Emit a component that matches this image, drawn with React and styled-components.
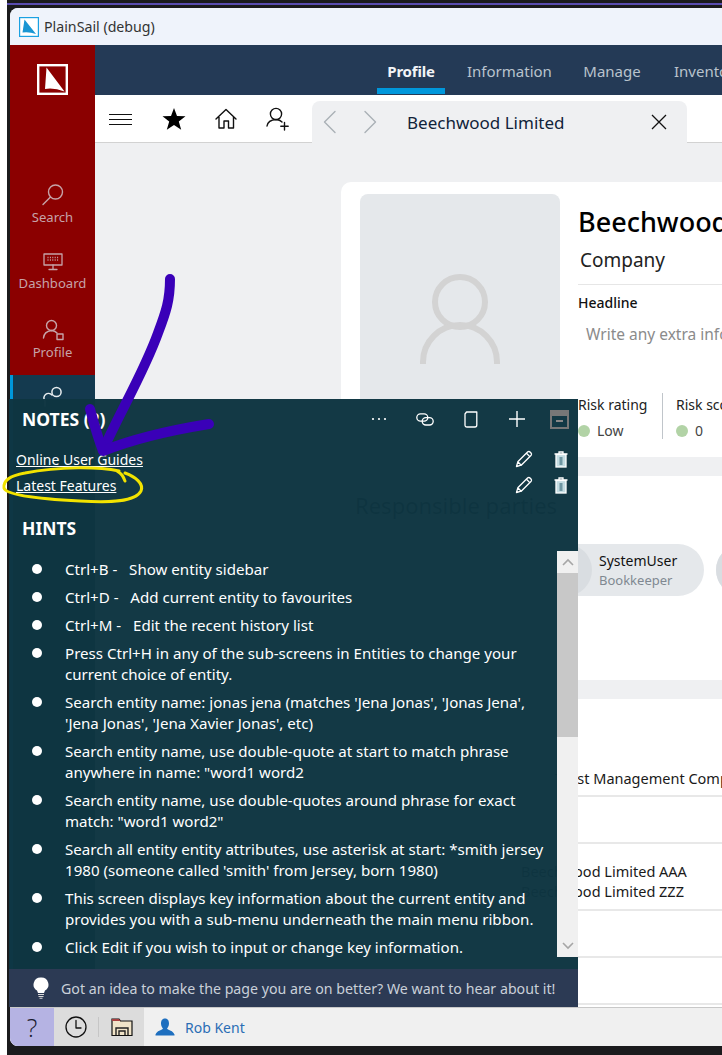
import React from "react";
import styled, { createGlobalStyle } from "styled-components";

const FONT = `"Noto Sans", "Open Sans", "Liberation Sans", sans-serif`;

const Global = createGlobalStyle`
  html, body { margin: 0; padding: 0; background: #fff; }
  body { font-family: ${FONT}; overflow: hidden; }
  * { box-sizing: border-box; }
`;

const Stage = styled.div`
  position: relative;
  width: 722px;
  height: 1055px;
  overflow: hidden;
  padding-left: 7px;
`;
const Desktop = styled.div`
  height: 100%;
  background: #1b1b1d;
  display: flex;
  flex-direction: column;
`;
const TopEdge = styled.div`
  height: 8px;
  padding-top: 3px;
  flex: none;
`;
const PurpleLine = styled.div`
  height: 2px;
  background: #5a4db0;
`;
const Win = styled.div`
  margin-left: 3px;
  height: 1038px;
  flex: none;
  border-radius: 8px 0 0 8px;
  overflow: hidden;
  display: flex;
  flex-direction: column;
  background: #eff0f2;
`;
const TitleBar = styled.div`
  height: 37px;
  flex: none;
  background: #eff3fb;
  display: flex;
  align-items: center;
  gap: 5px;
  padding-left: 9px;
  font-size: 14.2px;
  color: #333;
`;
const Main = styled.div`
  flex: 1;
  min-height: 0;
  display: flex;
`;
const Sidebar = styled.nav`
  width: 85px;
  flex: none;
  background: #8b0000;
  display: flex;
  flex-direction: column;
`;
const LogoBlock = styled.div`
  height: 128px;
  flex: none;
  padding-top: 19px;
  display: flex;
  justify-content: center;
`;
const SideItem = styled.div`
  height: ${(p) => p.$h}px;
  flex: none;
  display: flex;
  flex-direction: column;
  align-items: center;
  justify-content: flex-end;
  padding-bottom: 14px;
  gap: 1px;
  font-size: 13.1px;
  color: #c6a3a8;
`;
const ActiveSide = styled.div`
  flex: 1;
  background: #143a4f;
  border-left: 3px solid #0097db;
  display: flex;
  justify-content: center;
  padding-top: 11px;
  color: #ddd;
`;
const Content = styled.div`
  flex: 1;
  min-width: 0;
  display: flex;
  flex-direction: column;
`;
const TabBar = styled.div`
  height: 50px;
  flex: none;
  background: #243a56;
  display: flex;
  padding-left: 282px;
  overflow: hidden;
`;
const Tab = styled.div`
  height: 49px;
  flex: none;
  width: ${(p) => p.$w}px;
  padding: 16px 0 0;
  margin-right: ${(p) => p.$mr || 0}px;
  text-align: center;
  font-size: 15px;
  line-height: 20px;
  white-space: nowrap;
  font-weight: ${(p) => (p.$active ? 700 : 400)};
  letter-spacing: ${(p) => (p.$active ? "-0.2px" : "0")};
  color: ${(p) => (p.$active ? "#f2f4f7" : "#b9c3cd")};
  border-bottom: ${(p) => (p.$active ? "6px solid #0097db" : "none")};
`;
const Toolbar = styled.div`
  height: 48px;
  flex: none;
  background: #fff;
  border-bottom: 1px solid #d2d2d2;
  display: flex;
  align-items: center;
  padding-left: 14px;
`;
const ToolSlot = styled.div`
  width: ${(p) => p.$w}px;
  margin-left: ${(p) => p.$ml || 0}px;
  flex: none;
  display: flex;
  justify-content: center;
  align-items: center;
`;
const EntityTab = styled.div`
  margin-left: 6px;
  align-self: flex-end;
  width: 375px;
  height: 42px;
  background: #eff0f2;
  border-radius: 8px 8px 0 0;
  display: flex;
  align-items: center;
  flex: none;
  padding-left: 10px;
  margin-bottom: -1px;
`;
const EntityName = styled.div`
  width: 247px;
  padding-left: 5px;
  font-size: 17px;
  color: #11233a;
  white-space: nowrap;
`;
const Workspace = styled.div`
  flex: 1;
  min-height: 0;
  overflow: hidden;
  padding: 39px 0 0 246px;
  display: flex;
  flex-direction: column;
  gap: 19px;
`;
const ProfileCard = styled.section`
  height: 275px;
  flex: none;
  width: 500px;
  background: #fff;
  border-radius: 10px 0 0 10px;
  padding: 12px 0 0 19px;
  display: flex;
  gap: 18px;
`;
const Avatar = styled.div`
  width: 200px;
  height: 260px;
  flex: none;
  background: #e5e8eb;
  border-radius: 8px;
  display: flex;
  justify-content: center;
  padding-top: 80px;
`;
const Details = styled.div`
  flex: 1;
  min-width: 0;
  white-space: nowrap;
`;
const Name = styled.h1`
  margin: 11px 0 0;
  font-size: 27px;
  line-height: 34px;
  font-weight: 500;
  color: #000;
`;
const Kind = styled.div`
  margin: 8px 0 0 2px;
  font-size: 19px;
  line-height: 26px;
  color: #222;
`;
const Rule = styled.div`
  height: 1px;
  background: #e6e6e6;
  margin-top: 11px;
`;
const Headline = styled.div`
  margin-top: 8px;
  font-size: 14px;
  line-height: 20px;
  font-weight: 500;
  color: #111;
`;
const Placeholder = styled.div`
  margin: 11px 0 0 8px;
  font-size: 15.5px;
  line-height: 20px;
  color: #8b8b8b;
`;
const Risks = styled.div`
  margin-top: 49px;
  display: flex;
`;
const Risk = styled.div`
  width: ${(p) => p.$w}px;
  height: 46px;
  flex: none;
  font-size: 14px;
  line-height: 24px;
  color: #222;
  padding-left: ${(p) => p.$pl || 0}px;
  border-left: ${(p) => (p.$line ? "1px solid #c0c5ca" : "none")};
`;
const RiskValue = styled.div`
  display: flex;
  align-items: center;
  gap: 7px;
  line-height: 28px;
  color: #444;
`;
const Dot = styled.span`
  width: 12px;
  height: 12px;
  border-radius: 50%;
  background: #b2d3a6;
`;
const PartiesCard = styled.section`
  height: 204px;
  flex: none;
  width: 500px;
  background: #fff;
  padding: 14px 0 0 14px;
`;
const PartiesTitle = styled.h2`
  margin: 0;
  font-size: 22px;
  line-height: 30px;
  font-weight: 400;
  color: #222;
`;
const Chips = styled.div`
  margin: 24px 0 0 0;
  display: flex;
  gap: 12px;
  padding-left: 185px;
`;
const Chip = styled.div`
  width: 164px;
  height: 52px;
  flex: none;
  border-radius: 26px;
  background: #e5e8eb;
  display: flex;
  align-items: center;
  gap: 7px;
  font-size: 14px;
  line-height: 20px;
  color: #111;
`;
const ChipAvatar = styled.div`
  width: 52px;
  height: 52px;
  flex: none;
  border-radius: 50%;
  background: #d9dde1;
`;
const ChipRole = styled.div`
  font-size: 13px;
  line-height: 19px;
  color: #808891;
`;
const TableCard = styled.section`
  flex: 1;
  width: 500px;
  background: #fff;
`;
const TableRow = styled.div`
  height: ${(p) => p.$h}px;
  border-bottom: 2px solid #e8e8e8;
  padding-left: ${(p) => p.$indent}px;
  display: flex;
  flex-direction: column;
  justify-content: flex-end;
  padding-bottom: ${(p) => p.$pb}px;
  font-size: 14.5px;
  line-height: 20px;
  color: #1a1a1a;
  white-space: nowrap;
`;
const StatusBar = styled.footer`
  height: 39px;
  flex: none;
  background: #f0f0f0;
  border-top: 1px solid #c8c8c8;
  display: flex;
  align-items: stretch;
`;
const HelpBox = styled.div`
  width: 44px;
  background: #b5b3e3;
  display: flex;
  align-items: center;
  justify-content: center;
  font-family: "Open Sans", sans-serif;
  font-weight: 300;
  font-size: 25px;
  color: #1a1a2e;
`;
const QuickBox = styled.div`
  width: 90px;
  background: #dcdcdc;
  display: flex;
  align-items: center;
`;
const QuickSlot = styled.div`
  width: 45px;
  height: 20px;
  display: flex;
  align-items: center;
  justify-content: center;
  border-right: ${(p) => (p.$line ? "1px solid #c6c6c6" : "none")};
`;
const UserBox = styled.div`
  display: flex;
  align-items: center;
  padding-left: 11px;
  gap: 10px;
  font-size: 14px;
  color: #2a6db5;
`;

const NotesPanel = styled.aside`
  position: absolute;
  left: 9px;
  top: 399px;
  width: 569px;
  height: 608px;
  background: rgba(14, 53, 65, 0.98);
  display: flex;
  flex-direction: column;
  color: #fff;
`;
const PanelHead = styled.div`
  height: 40px;
  flex: none;
  display: flex;
  align-items: center;
`;
const PanelTitle = styled.h3`
  margin: 0;
  padding-left: 13px;
  font-size: 17.5px;
  line-height: 24px;
  font-weight: 700;
  color: #fff;
  white-space: nowrap;
`;
const HeadTools = styled.div`
  margin-left: auto;
  display: flex;
  align-items: center;
`;
const IconSlot = styled.div`
  width: ${(p) => p.$w}px;
  flex: none;
  display: flex;
  align-items: center;
  justify-content: center;
`;
const Links = styled.div`
  margin-top: 7px;
  flex: none;
`;
const LinkRow = styled.div`
  height: 26px;
  display: flex;
  align-items: center;
  padding-left: 7px;
`;
const NoteLink = styled.a`
  font-size: 14px;
  color: #fff;
  text-decoration: underline;
  margin-right: auto;
`;
const HintsTitle = styled(PanelTitle)`
  margin-top: 15px;
  line-height: 30px;
  flex: none;
`;
const HintsFrame = styled.div`
  margin-top: 8px;
  height: 406px;
  flex: none;
  display: flex;
`;
const HintList = styled.ul`
  flex: 1;
  min-width: 0;
  margin: 0;
  padding: 8px 0 0 19px;
  list-style: none;
  overflow: hidden;
  display: flex;
  flex-direction: column;
  gap: 7px;
`;
const Hint = styled.li`
  display: flex;
  font-size: 15.1px;
  line-height: 21px;
  color: #fff;
`;
const HintLine = styled.div`
  white-space: pre;
`;
const Bullet = styled.span`
  width: 10px;
  height: 10px;
  flex: none;
  margin: 5px 23px 0 4px;
  border-radius: 50%;
  background: #fff;
`;
const Scrollbar = styled.div`
  width: 21px;
  flex: none;
  background: #f0f0f0;
  display: flex;
  flex-direction: column;
  align-items: center;
`;
const ScrollArrow = styled.div`
  height: 22px;
  flex: none;
  display: flex;
  align-items: center;
`;
const ScrollThumb = styled.div`
  width: 100%;
  height: 164px;
  flex: none;
  background: #c8c8c8;
`;
const ScrollSpace = styled.div`
  flex: 1;
`;
const Feedback = styled.div`
  margin-top: auto;
  height: 38px;
  flex: none;
  background: #2c3a54;
  display: flex;
  align-items: center;
  padding-left: 24px;
  gap: 12px;
  font-size: 14.2px;
  color: #c9d0d9;
  white-space: nowrap;
`;
const Annotation = styled.svg`
  position: absolute;
  left: 0;
  top: 0;
  pointer-events: none;
`;

const hints = [
  ["Ctrl+B -   Show entity sidebar"],
  ["Ctrl+D -   Add current entity to favourites"],
  ["Ctrl+M -   Edit the recent history list"],
  ["Press Ctrl+H in any of the sub-screens in Entities to change your", "current choice of entity."],
  ["Search entity name: jonas jena (matches 'Jena Jonas', 'Jonas Jena',", "'Jena Jonas', 'Jena Xavier Jonas', etc)"],
  ["Search entity name, use double-quote at start to match phrase", "anywhere in name: \"word1 word2"],
  ["Search entity name, use double-quotes around phrase for exact", "match: \"word1 word2\""],
  ["Search all entity entity attributes, use asterisk at start: *smith jersey", "1980 (someone called 'smith' from Jersey, born 1980)"],
  ["This screen displays key information about the current entity and", "provides you with a sub-menu underneath the main menu ribbon."],
  ["Click Edit if you wish to input or change key information."],
];

const line = { fill: "none", stroke: "currentColor", strokeLinecap: "round", strokeLinejoin: "round" };

const Sail = ({ size }) => (
  <svg width={size} height={size} viewBox="0 0 20 20">
    <rect x="0.6" y="0.6" width="18.8" height="18.8" fill="#fff" stroke="#1ba1e2" strokeWidth="1.2" />
    <path d="M5.5 2.5 L17 17 Q10 14.5 3.5 15.5 Z" fill="#1996d3" />
  </svg>
);
const Pencil = () => (
  <svg width="18" height="18" viewBox="0 0 18 18" style={line} color="#fff" strokeWidth="1.3">
    <path d="M1.5 16.5 L2.8 11.8 L12.8 1.8 Q14 1 15.3 2.2 L16 3 Q17 4.2 16.2 5.2 L6.2 15.2 Z M11.5 3.2 L14.8 6.6 M2.8 11.8 L6.2 15.2" />
  </svg>
);
const Trash = () => (
  <svg width="14" height="17" viewBox="0 0 14 17">
    <rect x="2" y="3.5" width="10" height="12.5" fill="#c4dce2" stroke="#fff" strokeWidth="1.3" />
    <path d="M0.5 3 H13.5 M5 3 V1 H9 V3" stroke="#fff" strokeWidth="1.3" fill="none" />
    <path d="M7 6 V14" stroke="#6f97a3" strokeWidth="3" />
  </svg>
);

export default function App() {
  return (
    <>
      <Global />
      <Stage>
        <Desktop>
          <TopEdge>
            <PurpleLine />
          </TopEdge>
          <Win>
            <TitleBar>
              <Sail size={20} />
              PlainSail (debug)
            </TitleBar>
            <Main>
              <Sidebar>
                <LogoBlock>
                  <svg width="31" height="31" viewBox="0 0 31 31">
                    <rect x="1.2" y="1.2" width="28.6" height="28.6" fill="none" stroke="#fff" strokeWidth="2.4" />
                    <path d="M9.5 3.5 L27.5 27.5 Q17 23.5 8 25 Z" fill="#fff" />
                  </svg>
                </LogoBlock>
                <SideItem $h={67}>
                  <svg width="24" height="24" viewBox="0 0 24 24" style={line} color="#c6a3a8" strokeWidth="1.4">
                    <circle cx="14.5" cy="9" r="7" />
                    <path d="M9.5 14 L2 21.5" />
                  </svg>
                  Search
                </SideItem>
                <SideItem $h={66}>
                  <svg width="22" height="22" viewBox="0 0 22 22" style={line} color="#c6a3a8" strokeWidth="1.3">
                    <rect x="2" y="3" width="18" height="11" />
                    <path d="M11 14 V18 M7 18.5 H15" />
                    <path d="M5.5 6.5 H16.5 M5.5 9 H16.5" strokeDasharray="1 1.4" strokeLinecap="butt" />
                  </svg>
                  Dashboard
                </SideItem>
                <SideItem $h={69}>
                  <svg width="24" height="24" viewBox="0 0 24 24" style={line} color="#c6a3a8" strokeWidth="1.4">
                    <circle cx="10.5" cy="7.5" r="5" />
                    <path d="M2.5 20 Q3 13.5 10.5 12.5 Q14 12.8 16 15" />
                    <rect x="16" y="16" width="6" height="5.5" />
                  </svg>
                  Profile
                </SideItem>
                <ActiveSide>
                  <svg width="22" height="22" viewBox="0 0 22 22" style={line} color="#e8edf0" strokeWidth="1.5">
                    <circle cx="13.5" cy="6" r="4.6" />
                    <path d="M2 20 V15 A4.6 4.6 0 0 1 9 9" />
                  </svg>
                </ActiveSide>
              </Sidebar>
              <Content>
                <TabBar>
                  <Tab $w={68} $mr={22} $active>Profile</Tab>
                  <Tab $w={84} $mr={32}>Information</Tab>
                  <Tab $w={58} $mr={27}>Manage</Tab>
                  <Tab $w={80}>Inventory</Tab>
                </TabBar>
                <Toolbar>
                  <ToolSlot $w={24}>
                    <svg width="24" height="12" viewBox="0 0 24 12" stroke="#111" strokeWidth="1">
                      <path d="M0 1.5 H23 M0 6.5 H23 M0 11.5 H23" />
                    </svg>
                  </ToolSlot>
                  <ToolSlot $w={57} $ml={12}>
                    <svg width="24" height="24" viewBox="0 0 24 24">
                      <path d="M12 1 L15 9 L23.5 9.3 L16.8 14.5 L19.2 22.8 L12 18 L4.8 22.8 L7.2 14.5 L0.5 9.3 L9 9 Z" fill="#000" />
                    </svg>
                  </ToolSlot>
                  <ToolSlot $w={47}>
                    <svg width="24" height="22" viewBox="0 0 24 22" style={line} color="#111" strokeWidth="1.4">
                      <path d="M2 11 L12 1.5 L22 11 M5 9 V20 H10 V13 H14.5 V20 H19.5 V9" />
                    </svg>
                  </ToolSlot>
                  <ToolSlot $w={57}>
                    <svg width="26" height="26" viewBox="0 0 26 26" style={line} color="#111" strokeWidth="1.4">
                      <circle cx="11" cy="8" r="5.6" />
                      <path d="M2 20 Q3 14 11 13.5 Q15 13.8 17 16 M19.5 16.5 V24 M15.8 20.3 H23.2" />
                    </svg>
                  </ToolSlot>
                  <EntityTab>
                    <ToolSlot $w={16}>
                      <svg width="14" height="24" viewBox="0 0 14 24" style={line} color="#aab0b6" strokeWidth="1.4">
                        <path d="M12 1.5 L1.5 12 L12 22.5" />
                      </svg>
                    </ToolSlot>
                    <ToolSlot $w={64}>
                      <svg width="14" height="24" viewBox="0 0 14 24" style={line} color="#aab0b6" strokeWidth="1.4">
                        <path d="M2 1.5 L12.5 12 L2 22.5" />
                      </svg>
                    </ToolSlot>
                    <EntityName>Beechwood Limited</EntityName>
                    <ToolSlot $w={20}>
                      <svg width="16" height="16" viewBox="0 0 16 16" stroke="#111" strokeWidth="1.3">
                        <path d="M1 1 L15 15 M15 1 L1 15" />
                      </svg>
                    </ToolSlot>
                  </EntityTab>
                </Toolbar>
                <Workspace>
                  <ProfileCard>
                    <Avatar>
                      <svg width="80" height="90" viewBox="0 0 80 90" fill="none" stroke="#d3d3d3" strokeWidth="6">
                        <circle cx="40" cy="28" r="25" />
                        <path d="M3 90 V88 A37 37 0 0 1 77 88 V90" />
                      </svg>
                    </Avatar>
                    <Details>
                      <Name>Beechwood Limited</Name>
                      <Kind>Company</Kind>
                      <Rule />
                      <Headline>Headline</Headline>
                      <Placeholder>Write any extra information here</Placeholder>
                      <Risks>
                        <Risk $w={84}>
                          Risk rating
                          <RiskValue><Dot />Low</RiskValue>
                        </Risk>
                        <Risk $w={120} $pl={13} $line>
                          Risk score
                          <RiskValue><Dot />0</RiskValue>
                        </Risk>
                      </Risks>
                    </Details>
                  </ProfileCard>
                  <PartiesCard>
                    <PartiesTitle>Responsible parties</PartiesTitle>
                    <Chips>
                      <Chip>
                        <ChipAvatar />
                        <div>
                          SystemUser
                          <ChipRole>Bookkeeper</ChipRole>
                        </div>
                      </Chip>
                      <Chip>
                        <ChipAvatar />
                      </Chip>
                    </Chips>
                  </PartiesCard>
                  <TableCard>
                    <TableRow $h={98} $indent={214} $pb={7}>Trust Management Company</TableRow>
                    <TableRow $h={47} $indent={180} $pb={0} />
                    <TableRow $h={67} $indent={180} $pb={8}>
                      <div>Beechwood Limited AAA</div>
                      <div>Beechwood Limited ZZZ</div>
                    </TableRow>
                    <TableRow $h={47} $indent={180} $pb={0} />
                    <TableRow $h={47} $indent={180} $pb={0} />
                  </TableCard>
                </Workspace>
              </Content>
            </Main>
            <StatusBar>
              <HelpBox>?</HelpBox>
              <QuickBox>
                <QuickSlot $line>
                  <svg width="22" height="22" viewBox="0 0 22 22" style={line} color="#111" strokeWidth="1.3">
                    <circle cx="11" cy="11" r="10" />
                    <path d="M11 4.5 V12 H16" />
                  </svg>
                </QuickSlot>
                <QuickSlot>
                  <svg width="22" height="20" viewBox="0 0 22 20">
                    <path d="M1 2 H8 L9.5 4 H21 V18.5 H1 Z" fill="#f0e3c8" stroke="#111" strokeWidth="1.2" />
                    <path d="M1 2 H8 L9.5 4 H1 Z" fill="#a84040" />
                    <path d="M5 18 V11 H17 V18 M8 18 V14 H14 V18" fill="none" stroke="#222" strokeWidth="1.4" />
                  </svg>
                </QuickSlot>
              </QuickBox>
              <UserBox>
                <svg width="20" height="18" viewBox="0 0 20 18">
                  <path d="M10 0.5 C13 0.5 14 3 14 5.5 C14 8 12.8 9.5 12 10.5 C13.5 12.5 18 12.5 19.5 16.5 V17.5 H0.5 V16.5 C2 12.5 6.5 12.5 8 10.5 C7.2 9.5 6 8 6 5.5 C6 3 7 0.5 10 0.5 Z" fill="#1e6fbf" />
                </svg>
                Rob Kent
              </UserBox>
            </StatusBar>
          </Win>
        </Desktop>

        <NotesPanel>
          <PanelHead>
            <PanelTitle>NOTES (2)</PanelTitle>
            <HeadTools>
              <IconSlot $w={46}>
                <svg width="16" height="4" viewBox="0 0 16 4" fill="#fff">
                  <circle cx="2" cy="2" r="1.1" /><circle cx="8" cy="2" r="1.1" /><circle cx="14" cy="2" r="1.1" />
                </svg>
              </IconSlot>
              <IconSlot $w={46}>
                <svg width="18" height="13" viewBox="0 0 18 13" fill="none" stroke="#fff" strokeWidth="1.3">
                  <rect x="0.8" y="0.8" width="11" height="7.4" rx="3.7" />
                  <rect x="6.2" y="4.6" width="11" height="7.4" rx="3.7" />
                </svg>
              </IconSlot>
              <IconSlot $w={46}>
                <svg width="14" height="17" viewBox="0 0 14 17" style={line} color="#fff" strokeWidth="1.3">
                  <path d="M2.5 1 H12.8 V14 Q12.8 16 11 16 H3 Q1 16 1 14 V3 Z" />
                </svg>
              </IconSlot>
              <IconSlot $w={46}>
                <svg width="16" height="16" viewBox="0 0 16 16" stroke="#fff" strokeWidth="1.4">
                  <path d="M8 0 V16 M0 8 H16" />
                </svg>
              </IconSlot>
              <IconSlot $w={38}>
                <svg width="19" height="19" viewBox="0 0 19 19">
                  <path d="M0 0 H19 V19 H0 Z M2 6 V17 H17 V6 Z" fill="#777" fillRule="evenodd" />
                  <path d="M6 11 H13" stroke="#888" strokeWidth="2" />
                </svg>
              </IconSlot>
            </HeadTools>
          </PanelHead>
          <Links>
            <LinkRow>
              <NoteLink>Online User Guides</NoteLink>
              <IconSlot $w={40}><Pencil /></IconSlot>
              <IconSlot $w={34}><Trash /></IconSlot>
            </LinkRow>
            <LinkRow>
              <NoteLink>Latest Features</NoteLink>
              <IconSlot $w={40}><Pencil /></IconSlot>
              <IconSlot $w={34}><Trash /></IconSlot>
            </LinkRow>
          </Links>
          <HintsTitle>HINTS</HintsTitle>
          <HintsFrame>
            <HintList>
              {hints.map((lines) => (
                <Hint key={lines[0]}>
                  <Bullet />
                  <div>
                    {lines.map((t) => (
                      <HintLine key={t}>{t}</HintLine>
                    ))}
                  </div>
                </Hint>
              ))}
            </HintList>
            <Scrollbar>
              <ScrollArrow>
                <svg width="12" height="8" viewBox="0 0 12 8" fill="none" stroke="#a6a6a6" strokeWidth="1.6">
                  <path d="M1 7 L6 2 L11 7" />
                </svg>
              </ScrollArrow>
              <ScrollThumb />
              <ScrollSpace />
              <ScrollArrow>
                <svg width="12" height="8" viewBox="0 0 12 8" fill="none" stroke="#a6a6a6" strokeWidth="1.6">
                  <path d="M1 1 L6 6 L11 1" />
                </svg>
              </ScrollArrow>
            </Scrollbar>
          </HintsFrame>
          <Feedback>
            <svg width="16" height="22" viewBox="0 0 16 22">
              <path d="M8 0.5 A7 7 0 0 1 12 13.5 L11 16 H5 L4 13.5 A7 7 0 0 1 8 0.5 Z" fill="#fff" />
              <path d="M5 17.5 H11 M5.5 19.5 H10.5 M6.5 21.3 H9.5" stroke="#d8d8d8" strokeWidth="1.1" />
            </svg>
            Got an idea to make the page you are on better? We want to hear about it!
          </Feedback>
        </NotesPanel>

        <Annotation width="722" height="1055" viewBox="0 0 722 1055" fill="none" strokeLinecap="round" strokeLinejoin="round">
          <path d="M170 279 C170 300 166 312 158 333 C144 372 122 408 103 450" stroke="#3a00b8" strokeWidth="10" />
          <path d="M90 409 C94 424 98 438 103 451 C138 437 172 430 209 424" stroke="#3a00b8" strokeWidth="10" />
          <path d="M117 471 C122 474 123 476 125 481 M119 471 C100 467 60 466 25 473 C8 476 3 481 4 488 C6 495 40 499 80 501 C110 503 135 502 141 491 C144 484 136 477 125 473" stroke="#f2e300" strokeWidth="3" />
        </Annotation>
      </Stage>
    </>
  );
}
